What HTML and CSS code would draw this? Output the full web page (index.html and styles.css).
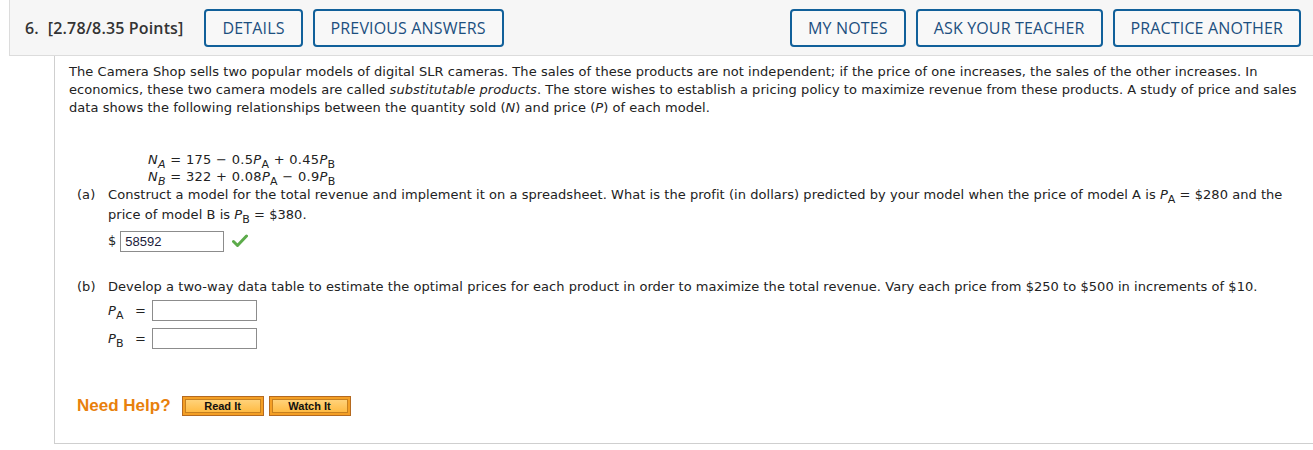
FILE: index.html
```html
<!DOCTYPE html>
<html>
<head>
<meta charset="utf-8">
<link rel="stylesheet" href="styles.css">
</head>
<body>
<div class="header">
  <div class="title"><span class="num">6.</span><span class="pts">[2.78/8.35 Points]</span></div>
  <div class="btns left">
    <span class="btn">DETAILS</span>
    <span class="btn">PREVIOUS ANSWERS</span>
  </div>
  <div class="btns right">
    <span class="btn">MY NOTES</span>
    <span class="btn">ASK YOUR TEACHER</span>
    <span class="btn">PRACTICE ANOTHER</span>
  </div>
</div>
<div class="content">
  <p class="intro">The Camera Shop sells two popular models of digital SLR cameras. The sales of these products are not independent; if the price of one increases, the sales of the other increases. In economics, these two camera models are called <i>substitutable products</i>. The store wishes to establish a pricing policy to maximize revenue from these products. A study of price and sales data shows the following relationships between the quantity sold (<i>N</i>) and price (<i>P</i>) of each model.</p>
  <div class="eqs">
    <div><i>N<sub>A</sub></i> = 175 − 0.5<i>P</i><sub>A</sub> + 0.45<i>P</i><sub>B</sub></div>
    <div><i>N<sub>B</sub></i> = 322 + 0.08<i>P</i><sub>A</sub> − 0.9<i>P</i><sub>B</sub></div>
  </div>
  <div class="part part-a">
    <div class="plabel">(a)</div>
    <div class="pbody">
      <div class="ptext">Construct a model for the total revenue and implement it on a spreadsheet. What is the profit (in dollars) predicted by your model when the price of model A is <i>P</i><sub>A</sub> = $280 and the price of model B is <i>P</i><sub>B</sub> = $380.</div>
      <div class="answer"><span class="dollar">$</span><span class="inp filled">58592</span><svg class="check" width="16" height="14" viewBox="0 0 16 14"><path d="M1.5 7.5 L5.5 11.5 L14.5 2" fill="none" stroke="#5cab4a" stroke-width="3" stroke-linecap="round" stroke-linejoin="round"/></svg></div>
    </div>
  </div>
  <div class="part part-b">
    <div class="plabel">(b)</div>
    <div class="pbody">
      <div class="ptext">Develop a two-way data table to estimate the optimal prices for each product in order to maximize the total revenue. Vary each price from $250 to $500 in increments of $10.</div>
      <div class="row first"><span class="var"><i>P</i><sub>A</sub></span><span class="eq">=</span><span class="inp"></span></div>
      <div class="row"><span class="var"><i>P</i><sub>B</sub></span><span class="eq">=</span><span class="inp"></span></div>
    </div>
  </div>
  <div class="help">
    <span class="need">Need Help?</span>
    <span class="hbtn"><span>Read It</span></span>
    <span class="hbtn"><span>Watch It</span></span>
  </div>
</div>
</body>
</html>
```
FILE: styles.css
```css
body {
  margin: 0;
  background: #fff;
  width: 1313px;
}
.header {
  margin-left: 9px;
  height: 55px;
  background: #f6f6f6;
  border-left: 1px solid #dcdcdc;
  border-bottom: 1px solid #dcdcdc;
  display: flex;
  align-items: center;
  padding: 0 12px 0 15px;
  font-family: "Open Sans", sans-serif;
}
.title {
  font-weight: 600;
  font-size: 16px;
  letter-spacing: 0.15px;
  color: #333;
  margin-right: 21px;
}
.num { margin-right: 9px; }
.btns {
  display: flex;
  gap: 10px;
}
.right { margin-left: auto; }
.btn {
  box-sizing: border-box;
  height: 38px;
  border: 2px solid #11609a;
  border-radius: 4px;
  padding: 0 16px;
  display: flex;
  align-items: center;
  font-size: 16px;
  font-weight: 500;
  letter-spacing: 0.15px;
  color: #1c4f7f;
  background: #f8f8f8;
}
.content {
  margin-left: 54px;
  width: 1255px;
  height: 380px;
  border-left: 1px solid #cfcfcf;
  border-right: 1px solid #cfcfcf;
  border-bottom: 1px solid #cfcfcf;
  border-bottom-right-radius: 4px;
  padding: 7px 0 0 14px;
  font-family: "DejaVu Sans", Verdana, sans-serif;
  color: #222;
}
.intro {
  margin: 0;
  font-size: 13px;
  line-height: 18px;
  width: 1236px;
  letter-spacing: 0.05px;
}
sub {
  font-size: 11px;
  vertical-align: -4px;
  line-height: 0;
}
.eqs {
  margin: 34px 0 0 79px;
  font-size: 13px;
  line-height: 17px;
  letter-spacing: 0.3px;
}
.part {
  display: flex;
  font-size: 13px;
  line-height: 20px;
  margin-left: 8px;
  letter-spacing: 0.05px;
}
.part-a { margin-top: 0; }
.part-b { margin-top: 26px; }
.plabel { width: 31px; }
.pbody { width: 1190px; }
.answer {
  display: flex;
  align-items: center;
  margin-top: 6px;
  height: 20px;
}
.dollar { margin-right: 4px; }
.inp {
  display: inline-block;
  width: 105px;
  height: 21px;
  box-sizing: border-box;
  border: 1px solid #8c8c8c;
  font-family: "Liberation Sans", Arial, sans-serif;
  font-size: 13px;
  line-height: 19px;
  padding-left: 4px;
  color: #1a1a3a;
  background: #fff;
  letter-spacing: 0;
}
.inp.filled { width: 104px; }
.check { margin-left: 8px; }
.row {
  display: flex;
  align-items: center;
  height: 21px;
  margin-top: 7px;
}
.row.first { margin-top: 3px; }
.var { width: 27px; }
.eq { width: 17px; }
.help {
  display: flex;
  align-items: center;
  margin: 47px 0 0 8px;
  gap: 5px;
}
.need {
  font-family: "Liberation Sans", Arial, sans-serif;
  font-weight: bold;
  font-size: 17px;
  color: #e8800c;
  margin-right: 6px;
}
.hbtn {
  width: 82px;
  height: 20px;
  box-sizing: border-box;
  border: 1px solid #b56a20;
  background: #f49f25;
  padding: 2px;
  display: flex;
}
.hbtn span {
  flex: 1;
  border: 1px solid #c7801f;
  background: linear-gradient(#ffd27a, #ffbb44);
  font-family: "Liberation Sans", Arial, sans-serif;
  font-weight: bold;
  font-size: 11px;
  color: #111;
  display: flex;
  align-items: center;
  justify-content: center;
}
```
